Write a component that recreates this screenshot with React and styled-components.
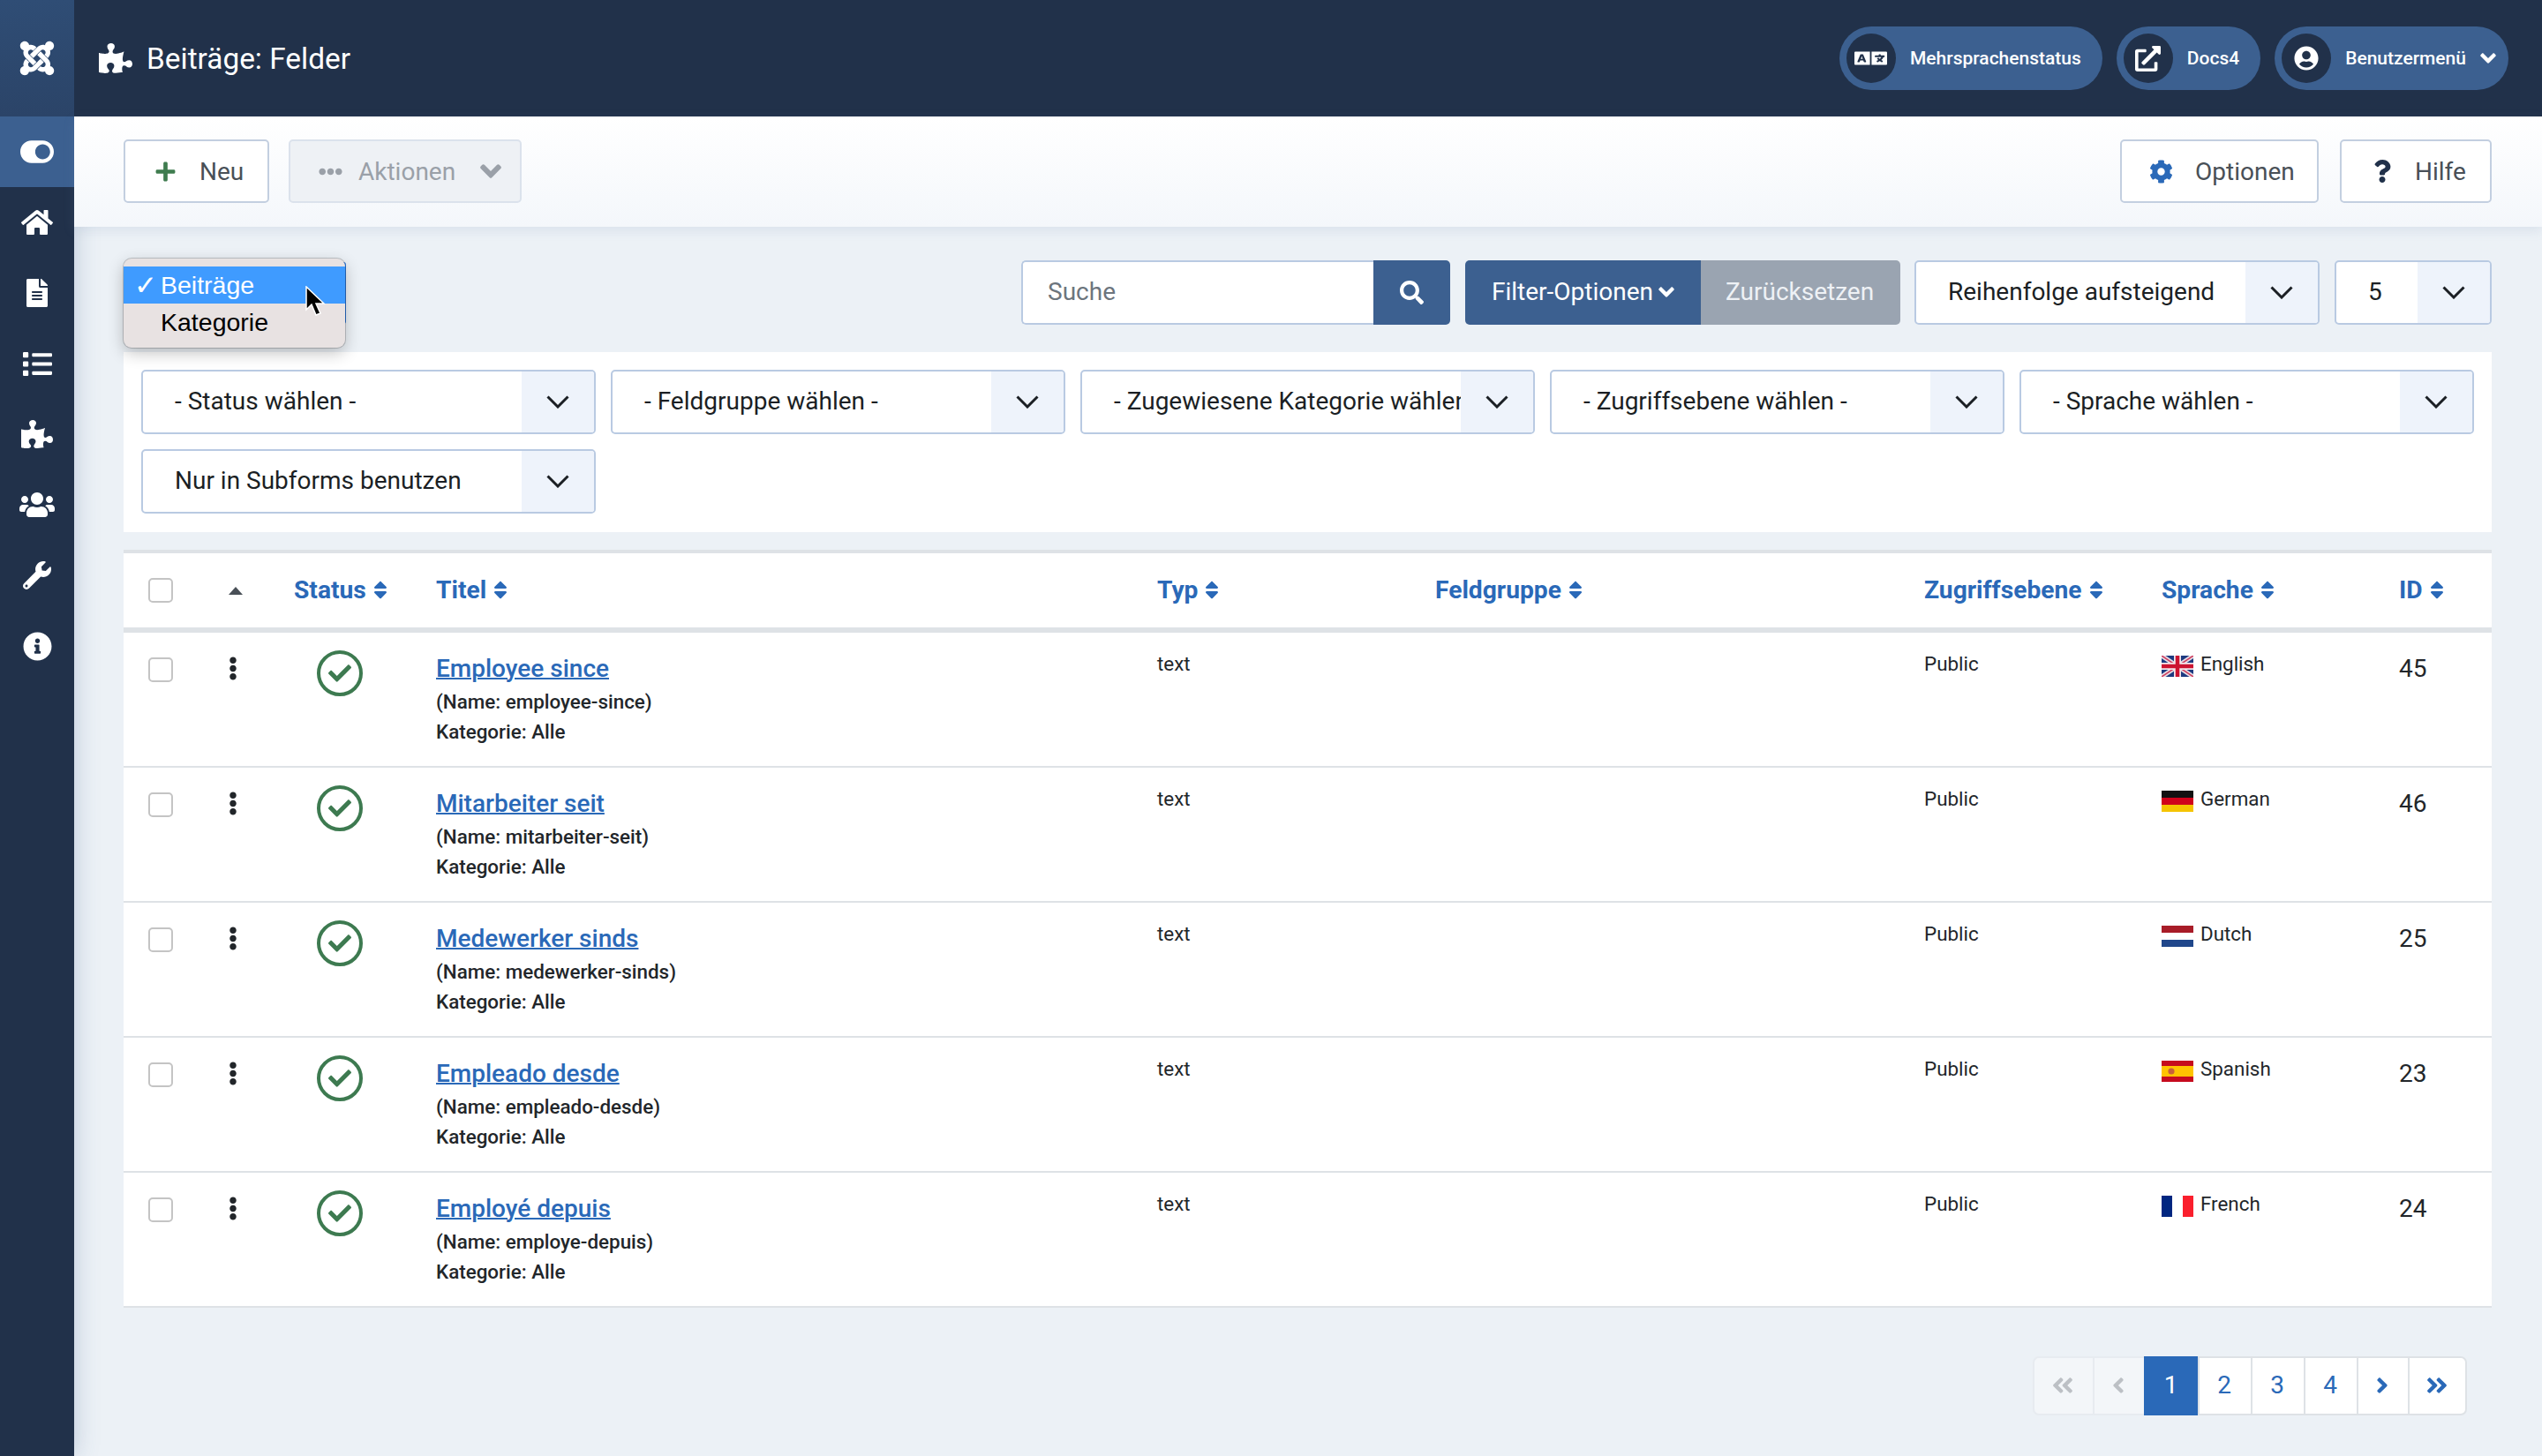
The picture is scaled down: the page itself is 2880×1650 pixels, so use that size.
import React from "react";
import styled, { createGlobalStyle } from "styled-components";
import {
  FaJoomla,
  FaPuzzlePiece,
  FaToggleOn,
  FaHome,
  FaFileAlt,
  FaList,
  FaUsers,
  FaWrench,
  FaInfoCircle,
  FaLanguage,
  FaExternalLinkAlt,
  FaUserCircle,
  FaAngleDown,
  FaPlus,
  FaEllipsisH,
  FaCog,
  FaQuestion,
  FaSearch,
  FaSort,
  FaEllipsisV,
  FaCheck,
  FaAngleDoubleLeft,
  FaAngleDoubleRight,
  FaAngleLeft,
  FaAngleRight
} from "react-icons/fa";

const GlobalStyle = createGlobalStyle`
  html, body {
    margin: 0;
    padding: 0;
    background: #ecf1f6;
    overflow: hidden;
  }
  * {
    box-sizing: border-box;
  }
`;

const rows = [
  { title: "Employee since", name: "employee-since", lang: "English", flag: "gb", id: 45 },
  { title: "Mitarbeiter seit", name: "mitarbeiter-seit", lang: "German", flag: "de", id: 46 },
  { title: "Medewerker sinds", name: "medewerker-sinds", lang: "Dutch", flag: "nl", id: 25 },
  { title: "Empleado desde", name: "empleado-desde", lang: "Spanish", flag: "es", id: 23 },
  { title: "Employé depuis", name: "employe-depuis", lang: "French", flag: "fr", id: 24 }
];

const filters = [
  "- Status wählen -",
  "- Feldgruppe wählen -",
  "- Zugewiesene Kategorie wählen -",
  "- Zugriffsebene wählen -",
  "- Sprache wählen -",
  "Nur in Subforms benutzen"
];

const navIcons = [
  { Icon: FaHome, size: 36 },
  { Icon: FaFileAlt, size: 32 },
  { Icon: FaList, size: 33 },
  { Icon: FaPuzzlePiece, size: 36 },
  { Icon: FaUsers, size: 40 },
  { Icon: FaWrench, size: 32 },
  { Icon: FaInfoCircle, size: 33 }
];

const Chevron = () => (
  <svg width="26" height="15" viewBox="0 0 26 15" fill="none">
    <polyline points="1.5,1.5 13,13 24.5,1.5" stroke="#1b1f24" strokeWidth="3" />
  </svg>
);

const Flag = ({ code }) => {
  if (code === "gb") {
    return (
      <FlagSvg viewBox="0 0 36 24">
        <rect width="36" height="24" fill="#1d3a80" />
        <path d="M0 0L36 24M36 0L0 24" stroke="#e8dfe6" strokeWidth="5" />
        <path d="M0 0L36 24M36 0L0 24" stroke="#cf4060" strokeWidth="1.6" />
        <path d="M18 0V24M0 12H36" stroke="#f3e8ec" strokeWidth="8" />
        <path d="M18 0V24M0 12H36" stroke="#cc1330" strokeWidth="4.5" />
      </FlagSvg>
    );
  }
  if (code === "de") {
    return (
      <FlagSvg viewBox="0 0 36 24">
        <rect width="36" height="8" fill="#111" />
        <rect y="8" width="36" height="8" fill="#d0021b" />
        <rect y="16" width="36" height="8" fill="#f5c400" />
      </FlagSvg>
    );
  }
  if (code === "nl") {
    return (
      <FlagSvg viewBox="0 0 36 24">
        <rect width="36" height="8" fill="#a81c28" />
        <rect y="8" width="36" height="8" fill="#fff" />
        <rect y="16" width="36" height="8" fill="#20478b" />
      </FlagSvg>
    );
  }
  if (code === "es") {
    return (
      <FlagSvg viewBox="0 0 36 24">
        <rect width="36" height="24" fill="#c60b1e" />
        <rect y="6" width="36" height="12" fill="#ffc400" />
        <circle cx="11" cy="12" r="3.6" fill="#c8603a" />
      </FlagSvg>
    );
  }
  return (
    <FlagSvg viewBox="0 0 36 24">
      <rect width="12" height="24" fill="#002680" />
      <rect x="12" width="12" height="24" fill="#fff" />
      <rect x="24" width="12" height="24" fill="#fa1f2d" />
    </FlagSvg>
  );
};

const SelectBox = ({ label, basis }) => (
  <SelectWrap $basis={basis}>
    <SelectLabel>{label}</SelectLabel>
    <SelectArrow>
      <Chevron />
    </SelectArrow>
  </SelectWrap>
);

const SortHead = ({ label }) => (
  <HeadCell>
    {label}
    <FaSort />
  </HeadCell>
);

const App = () => {
  return (
    <Page>
      <GlobalStyle />
      <Sidebar>
        <LogoBlock>
          <FaJoomla size={44} />
        </LogoBlock>
        <ToggleBlock>
          <FaToggleOn size={38} />
        </ToggleBlock>
        {navIcons.map(({ Icon, size }, i) => (
          <NavItem key={i}>
            <Icon size={size} />
          </NavItem>
        ))}
      </Sidebar>

      <Main>
        <Header>
          <TitleGroup>
            <FaPuzzlePiece size={38} />
            <PageTitle>Beiträge: Felder</PageTitle>
          </TitleGroup>
          <PillGroup>
            <Pill>
              <PillCircle>
                <LanguageIcon preserveAspectRatio="none" />
              </PillCircle>
              <PillText>Mehrsprachenstatus</PillText>
            </Pill>
            <Pill>
              <PillCircle>
                <FaExternalLinkAlt size={29} />
              </PillCircle>
              <PillText>Docs4</PillText>
            </Pill>
            <Pill $tight>
              <PillCircle>
                <FaUserCircle size={28} />
              </PillCircle>
              <PillText>Benutzermenü</PillText>
              <PillChevron />
            </Pill>
          </PillGroup>
        </Header>

        <Toolbar>
          <ToolGroup $gap={22}>
            <ToolButton $width={165} $pad={33}>
              <IconSlot $color="#3f7c4f" $gap={26}>
                <FaPlus size={25} />
              </IconSlot>
              Neu
            </ToolButton>
            <ToolButton $width={264} $pad={32} $disabled>
              <IconSlot $color="#9aa0a8" $gap={18}>
                <FaEllipsisH size={27} />
              </IconSlot>
              Aktionen
              <ActionChevron />
            </ToolButton>
          </ToolGroup>
          <ToolGroup $gap={24}>
            <ToolButton $width={225} $pad={31}>
              <IconSlot $color="#2a69b8" $gap={25}>
                <FaCog size={27} />
              </IconSlot>
              Optionen
            </ToolButton>
            <ToolButton $width={172} $pad={33}>
              <IconSlot $color="#21314a" $gap={24}>
                <FaQuestion size={26} />
              </IconSlot>
              Hilfe
            </ToolButton>
          </ToolGroup>
        </Toolbar>

        <Content>
          <FilterRow>
            <MenuAnchor>
              <MenuEdge />
              <SelectMenu>
                <MenuItem $active>
                  <MenuTick>✓</MenuTick>Beiträge
                </MenuItem>
                <MenuItem>Kategorie</MenuItem>
                <MenuCursor viewBox="0 0 24 36">
                  <path
                    d="M2 1L2 27L8 21L13 33L18 31L13 20L22 20Z"
                    fill="#000"
                    stroke="#fff"
                    strokeWidth="1.5"
                  />
                </MenuCursor>
              </SelectMenu>
            </MenuAnchor>
            <SearchBox>
              <SearchInput>Suche</SearchInput>
              <SearchButton>
                <FaSearch size={27} />
              </SearchButton>
            </SearchBox>
            <ButtonPair>
              <FilterButton>
                Filter-Optionen
                <FilterChevron />
              </FilterButton>
              <ResetButton>Zurücksetzen</ResetButton>
            </ButtonPair>
            <SelectBox label="Reihenfolge aufsteigend" basis={459} />
            <SelectBox label="5" basis={178} />
          </FilterRow>

          <FilterPanel>
            {filters.map(f => (
              <SelectBox key={f} label={f} basis={515} />
            ))}
          </FilterPanel>

          <Table>
            <HeadRow>
              <CheckCell>
                <CheckBox />
              </CheckCell>
              <div>
                <OrderCaret />
              </div>
              <SortHead label="Status" />
              <SortHead label="Titel" />
              <SortHead label="Typ" />
              <SortHead label="Feldgruppe" />
              <SortHead label="Zugriffsebene" />
              <SortHead label="Sprache" />
              <SortHead label="ID" />
            </HeadRow>
            {rows.map(r => (
              <BodyRow key={r.id}>
                <CheckCell $top>
                  <CheckBox />
                </CheckCell>
                <DragCell>
                  <FaEllipsisV />
                </DragCell>
                <StatusCell>
                  <StatusCircle>
                    <FaCheck size={26} />
                  </StatusCircle>
                </StatusCell>
                <TitleCell>
                  <TitleLink>{r.title}</TitleLink>
                  <SmallLine>(Name: {r.name})</SmallLine>
                  <SmallLine>Kategorie: Alle</SmallLine>
                </TitleCell>
                <PlainCell>text</PlainCell>
                <PlainCell />
                <PlainCell>Public</PlainCell>
                <PlainCell>
                  <LangWrap>
                    <Flag code={r.flag} />
                    {r.lang}
                  </LangWrap>
                </PlainCell>
                <IdCell>{r.id}</IdCell>
              </BodyRow>
            ))}
          </Table>

          <PagerRow>
            <Pager>
              <PageCell $width={68} $disabled>
                <FaAngleDoubleLeft size={28} />
              </PageCell>
              <PageCell $width={58} $disabled>
                <FaAngleLeft size={28} />
              </PageCell>
              <PageCell $width={61} $active>
                1
              </PageCell>
              <PageCell $width={60}>2</PageCell>
              <PageCell $width={60}>3</PageCell>
              <PageCell $width={60}>4</PageCell>
              <PageCell $width={58}>
                <FaAngleRight size={28} />
              </PageCell>
              <PageCell $width={67}>
                <FaAngleDoubleRight size={28} />
              </PageCell>
            </Pager>
          </PagerRow>
        </Content>
      </Main>
    </Page>
  );
};

const Page = styled.div`
  display: flex;
  width: 2880px;
  height: 1650px;
  font-family: Roboto, "Liberation Sans", sans-serif;
  background: #ecf1f6;
`;
const Sidebar = styled.aside`
  flex: 0 0 84px;
  display: flex;
  flex-direction: column;
  background: #21314a;
  color: #fff;
  box-shadow: 0 0 26px rgba(60, 96, 144, 0.28);
`;
const LogoBlock = styled.div`
  height: 132px;
  display: flex;
  align-items: center;
  justify-content: center;
  background: linear-gradient(180deg, #2f4d75 0%, #2b4468 100%);
`;
const ToggleBlock = styled.div`
  height: 80px;
  display: flex;
  align-items: center;
  justify-content: center;
  background: #3c6090;
`;
const NavItem = styled.div`
  height: 80px;
  display: flex;
  align-items: center;
  justify-content: center;
`;
const Main = styled.div`
  flex: 1;
  min-width: 0;
  display: flex;
  flex-direction: column;
`;
const Header = styled.header`
  height: 132px;
  display: flex;
  align-items: center;
  justify-content: space-between;
  padding: 0 38px 0 28px;
  background: #21314a;
  color: #fff;
`;
const TitleGroup = styled.div`
  display: flex;
  align-items: center;
  gap: 16px;
`;
const PageTitle = styled.h1`
  margin: 0;
  font-size: 33.4px;
  font-weight: 400;
`;
const PillGroup = styled.div`
  display: flex;
  gap: 16px;
`;
const Pill = styled.div`
  height: 72px;
  display: flex;
  align-items: center;
  gap: 16px;
  padding: 0 ${p => (p.$tight ? "14px" : "24px")} 0 8px;
  border-radius: 36px;
  background: #3c6090;
`;
const PillCircle = styled.span`
  width: 56px;
  height: 56px;
  border-radius: 50%;
  background: #21314a;
  display: flex;
  align-items: center;
  justify-content: center;
`;
const LanguageIcon = styled(FaLanguage)`
  width: 37px;
  height: 24px;
`;
const PillText = styled.span`
  font-size: 21px;
  font-weight: 500;
`;
const PillChevron = styled(FaAngleDown)`
  width: 18px;
  height: 28px;
`;
const Toolbar = styled.div`
  height: 125px;
  display: flex;
  align-items: flex-start;
  justify-content: space-between;
  padding: 26px 57px 0 56px;
  background: linear-gradient(180deg, #ffffff 0%, #f4f7fb 100%);
  box-shadow: 0 4px 12px rgba(120, 145, 180, 0.16);
`;
const ToolGroup = styled.div`
  display: flex;
  gap: ${p => p.$gap}px;
`;
const ToolButton = styled.div`
  width: ${p => p.$width}px;
  height: 72px;
  display: flex;
  align-items: center;
  justify-content: flex-start;
  padding-left: ${p => p.$pad}px;
  border: 2px solid ${p => (p.$disabled ? "#dbe2ec" : "#c3cfe0")};
  border-radius: 5px;
  background: ${p => (p.$disabled ? "#eef1f5" : "#fff")};
  color: ${p => (p.$disabled ? "#9aa0a8" : "#495057")};
  font-size: 28px;
`;
const IconSlot = styled.span`
  display: flex;
  margin-right: ${p => p.$gap}px;
  color: ${p => p.$color};
`;
const ActionChevron = styled(FaAngleDown)`
  width: 24px;
  height: 38px;
  margin-left: 28px;
  color: #9aa0a8;
`;
const Content = styled.main`
  flex: 1;
  padding: 38px 57px 0 56px;
`;
const FilterRow = styled.div`
  position: relative;
  height: 73px;
  display: flex;
  justify-content: flex-end;
  gap: 17px;
`;
const MenuAnchor = styled.div`
  position: absolute;
  left: 0;
  top: -2px;
`;
const MenuEdge = styled.span`
  position: absolute;
  right: -1px;
  top: 4px;
  width: 3px;
  height: 70px;
  background: #2f7fe8;
  border-radius: 0 4px 4px 0;
`;
const SelectMenu = styled.div`
  position: relative;
  width: 251px;
  height: 101px;
  padding: 9px 0 8px;
  background: #e8e2e2;
  border-radius: 9px;
  box-shadow: 0 0 0 1px rgba(0, 0, 0, 0.18), 0 6px 18px rgba(0, 0, 0, 0.24);
  font-family: "Liberation Sans", Arial, sans-serif;
  font-size: 28.5px;
  color: #000;
`;
const MenuItem = styled.div`
  position: relative;
  height: 42px;
  line-height: 42px;
  padding-left: 42px;
  background: ${p => (p.$active ? "#3f9bff" : "transparent")};
  color: ${p => (p.$active ? "#fff" : "#000")};
`;
const MenuTick = styled.span`
  position: absolute;
  left: 12px;
  font-family: "DejaVu Sans", sans-serif;
  font-size: 31px;
`;
const MenuCursor = styled.svg`
  position: absolute;
  left: 205px;
  top: 31px;
  width: 24px;
  height: 36px;
`;
const SearchBox = styled.div`
  width: 486px;
  display: flex;
  border-radius: 5px;
  overflow: hidden;
`;
const SearchInput = styled.div`
  flex: 1;
  display: flex;
  align-items: center;
  padding-left: 28px;
  padding-bottom: 2px;
  background: #fff;
  border: 2px solid #b9cae2;
  border-right: none;
  border-radius: 5px 0 0 5px;
  color: #6c757d;
  font-size: 28px;
`;
const SearchButton = styled.div`
  width: 87px;
  display: flex;
  align-items: center;
  justify-content: center;
  background: #3c6090;
  color: #fff;
`;
const ButtonPair = styled.div`
  display: flex;
  margin-right: -1px;
  border-radius: 5px;
  overflow: hidden;
  font-size: 28px;
  color: #fff;
`;
const FilterButton = styled.div`
  width: 267px;
  display: flex;
  align-items: center;
  padding: 0 0 2px 30px;
  gap: 6px;
  background: #3c6090;
`;
const FilterChevron = styled(FaAngleDown)`
  width: 18px;
  height: 28px;
`;
const ResetButton = styled.div`
  width: 226px;
  display: flex;
  align-items: center;
  padding: 0 0 2px 28px;
  background: #9aa4b1;
  color: #eef1f5;
`;
const SelectWrap = styled.div`
  flex: 0 0 ${p => p.$basis}px;
  width: ${p => p.$basis}px;
  height: 73px;
  display: flex;
  background: #fff;
  border: 2px solid #b9cae2;
  border-radius: 5px;
  overflow: hidden;
  color: #1b1f24;
  font-size: 28px;
`;
const SelectLabel = styled.div`
  flex: 1;
  min-width: 0;
  padding-left: 36px;
  line-height: 67px;
  white-space: nowrap;
  overflow: hidden;
`;
const SelectArrow = styled.div`
  flex: 0 0 82px;
  display: flex;
  align-items: center;
  justify-content: center;
  background: #eef3fb;
`;
const FilterPanel = styled.div`
  margin-top: 31px;
  height: 204px;
  padding: 20px;
  display: flex;
  flex-wrap: wrap;
  align-content: flex-start;
  gap: 17px 17px;
  background: #fff;
`;
const Table = styled.div`
  margin-top: 20px;
  background: #fff;
  border-top: 4px solid #dee2e6;
`;
const columns = "119px 74px 161px 817px 315px 554px 269px 269px 1fr";
const HeadRow = styled.div`
  display: grid;
  grid-template-columns: ${columns};
  align-items: center;
  height: 90px;
  border-bottom: 6px solid #dee2e6;
`;
const BodyRow = styled.div`
  display: grid;
  grid-template-columns: ${columns};
  align-items: start;
  height: 153px;
  border-bottom: 2px solid #dee2e6;
`;
const CheckCell = styled.div`
  display: flex;
  padding-left: 28px;
  padding-top: ${p => (p.$top ? "28px" : "0")};
`;
const CheckBox = styled.span`
  width: 28px;
  height: 28px;
  border: 2px solid #c4c4c4;
  border-radius: 5px;
  background: #fff;
`;
const OrderCaret = styled.span`
  display: block;
  width: 0;
  height: 0;
  border-left: 8.5px solid transparent;
  border-right: 8.5px solid transparent;
  border-bottom: 9px solid #495057;
`;
const HeadCell = styled.div`
  display: flex;
  align-items: center;
  gap: 8px;
  padding-bottom: 2px;
  font-size: 28.2px;
  font-weight: 700;
  color: #2a69b8;
  white-space: nowrap;
  svg {
    width: 16px;
    height: 25px;
  }
`;
const DragCell = styled.div`
  display: flex;
  padding-top: 27px;
  color: #22262a;
  svg {
    width: 10px;
    height: 27px;
  }
`;
const StatusCell = styled.div`
  padding: 20px 0 0 26px;
`;
const StatusCircle = styled.span`
  width: 52px;
  height: 52px;
  border: 4.5px solid #3d7a50;
  border-radius: 50%;
  display: flex;
  align-items: center;
  justify-content: center;
  color: #3d7a50;
`;
const TitleCell = styled.div`
  padding-top: 24px;
  display: flex;
  flex-direction: column;
  align-items: flex-start;
`;
const TitleLink = styled.a`
  font-size: 28px;
  font-weight: 500;
  line-height: 34px;
  margin-bottom: 3px;
  color: #2a69b8;
  text-decoration: underline;
  text-decoration-thickness: 2px;
`;
const SmallLine = styled.div`
  font-size: 22.4px;
  font-weight: 500;
  line-height: 34px;
  color: #22262a;
`;
const PlainCell = styled.div`
  padding-top: 19px;
  font-size: 22.4px;
  line-height: 32px;
  color: #22262a;
`;
const LangWrap = styled.div`
  display: flex;
  align-items: center;
  gap: 8px;
`;
const FlagSvg = styled.svg`
  width: 36px;
  height: 24px;
  flex: none;
  position: relative;
  top: 3px;
`;
const IdCell = styled.div`
  padding-top: 24px;
  font-size: 28px;
  line-height: 34px;
  color: #22262a;
`;
const PagerRow = styled.div`
  display: flex;
  justify-content: flex-end;
  padding: 55px 28px 0 0;
`;
const Pager = styled.nav`
  display: flex;
  height: 67px;
`;
const PageCell = styled.span`
  width: ${p => p.$width}px;
  display: flex;
  align-items: center;
  justify-content: center;
  padding: 0 2px 2px 0;
  border: 2px solid ${p => (p.$active ? "#2a69b8" : p.$disabled ? "#e7ebf0" : "#dee2e6")};
  border-right: none;
  background: ${p =>
    p.$active ? "#2a69b8" : p.$disabled ? "#f3f6f9" : "#fff"};
  color: ${p =>
    p.$active ? "#fff" : p.$disabled ? "#bcc0c5" : "#2a69b8"};
  font-size: 28px;
  &:first-child {
    border-radius: 7px 0 0 7px;
  }
  &:last-child {
    border-right: 2px solid #dee2e6;
    border-radius: 0 7px 7px 0;
  }
`;

export default App;
